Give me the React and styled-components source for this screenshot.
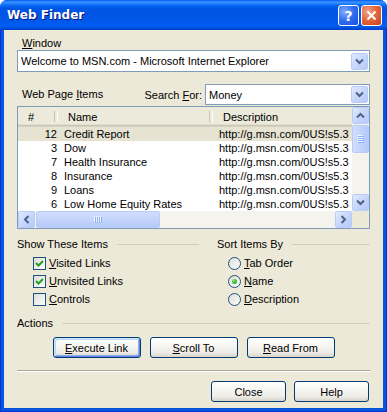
import React from 'react';
import styled, { createGlobalStyle } from 'styled-components';

const Global = createGlobalStyle`
  html, body { margin: 0; padding: 0; background: #ffffff; }
  body { font-family: "Liberation Sans", Arial, sans-serif; font-size: 11px; color: #000; }
  * { box-sizing: border-box; }
`;

const Win = styled.div`
  width: 387px;
  height: 412px;
  display: flex;
  flex-direction: column;
  background: #0855DD;
  border-radius: 7px 7px 0 0;
  overflow: hidden;
`;

const TitleBar = styled.div`
  height: 30px;
  flex: none;
  display: flex;
  align-items: center;
  padding: 0 5px 0 7px;
  background: linear-gradient(to bottom, #0058EE 0px, #3A93FF 2px, #2F8AFF 3px, #0B6EF5 5px, #0057E5 8px, #0054E3 14px, #0058EB 22px, #005FF5 26px, #0050DB 28px, #003DC8 30px);
`;

const Title = styled.div`
  flex: 1;
  font-family: "DejaVu Sans", "Liberation Sans", sans-serif;
  font-weight: bold;
  font-size: 12px;
  color: #fff;
  text-shadow: 1px 1px 0 #0A1883;
  padding-bottom: 1px;
`;

const TitleBtns = styled.div`
  display: flex;
  gap: 2px;
  padding-top: 1px;
`;

const CapBtn = styled.div`
  width: 21px;
  height: 21px;
  border: 1px solid #fff;
  border-radius: 3px;
  display: flex;
  align-items: center;
  justify-content: center;
  color: #fff;
  font-family: "DejaVu Sans", sans-serif;
  font-weight: bold;
  font-size: 14px;
  background: ${p => p.$red
    ? 'radial-gradient(circle at 30% 30%, #F0A58C 0%, #E4683F 45%, #C8401A 100%)'
    : 'radial-gradient(circle at 30% 30%, #7FAEFF 0%, #2E6CF1 50%, #1A4FD6 100%)'};
`;

const Frame = styled.div`
  flex: 1;
  display: flex;
  padding: 0 4px 4px;
  box-shadow: inset 1px 0 0 #0831D9, inset -1px 0 0 #0831D9, inset 0 -1px 0 #0831D9;
`;

const Client = styled.div`
  flex: 1;
  background: #ECE9D8;
  padding: 7px 13px 6px;
  display: flex;
  flex-direction: column;
`;

const Label = styled.div`
  line-height: 13px;
  height: 13px;
  padding-left: ${p => p.$pl ?? 5}px;
  white-space: nowrap;
`;

const Combo = styled.div`
  height: 21px;
  flex: ${p => (p.$w ? 'none' : '1')};
  width: ${p => (p.$w ? p.$w + 'px' : 'auto')};
  border: 1px solid #7F9DB9;
  background: #fff;
  display: flex;
  align-items: center;
  padding: 0 1px 0 3px;
`;

const ComboText = styled.div`
  flex: 1;
  white-space: nowrap;
  overflow: hidden;
`;

const ArrowBtn = styled.div`
  width: ${p => p.$w || 17}px;
  height: ${p => p.$h || 17}px;
  flex: none;
  border: 1px solid #B8CCF7;
  border-radius: 2px;
  background: linear-gradient(135deg, #E1EAFE 0%, #C7D7FC 50%, #B4C9F8 100%);
  display: flex;
  align-items: center;
  justify-content: center;
`;

const SearchRow = styled.div`
  margin-top: 12px;
  display: flex;
  align-items: center;
`;

const SearchLabel = styled.div`
  margin-right: 3px;
  white-space: nowrap;
`;

const Spacer = styled.div`
  flex: 1;
`;

const ListBox = styled.div`
  margin-top: 1px;
  height: 123px;
  flex: none;
  border: 1px solid #7F9DB9;
  background: #fff;
  display: grid;
  grid-template-columns: 1fr 17px;
  grid-template-rows: 1fr 17px;
  overflow: hidden;
`;

const ListBody = styled.div`
  overflow: hidden;
  display: flex;
  flex-direction: column;
`;

const COLS = '40px 155px 1fr';

const Header = styled.div`
  height: 20px;
  flex: none;
  display: grid;
  grid-template-columns: ${COLS};
  background: #EBEADB;
  box-shadow: inset 0 -1px 0 #D6D2C2, inset 0 -2px 0 #CBC7B8, inset 0 -3px 0 #E2DECD;
`;

const HeadCell = styled.div`
  position: relative;
  padding-left: 10px;
  padding-bottom: 1px;
  display: flex;
  align-items: center;
  white-space: nowrap;
  overflow: hidden;
  &::after {
    content: '';
    display: ${p => (p.$last ? 'none' : 'block')};
    position: absolute;
    right: 0;
    top: 4px;
    bottom: 5px;
    width: 2px;
    border-left: 1px solid #C7C5B2;
    border-right: 1px solid #FFFFFF;
  }
`;

const Row = styled.div`
  height: 14px;
  flex: none;
  display: grid;
  grid-template-columns: ${COLS};
  background: ${p => (p.$sel ? '#E6E3D3' : 'transparent')};
  line-height: 14px;
`;

const Cell = styled.div`
  white-space: nowrap;
  overflow: hidden;
  text-align: ${p => (p.$right ? 'right' : 'left')};
  padding: ${p => (p.$right ? '0 1px 0 0' : '0 0 0 6px')};
`;

const VScroll = styled.div`
  display: flex;
  flex-direction: column;
  background: #F4F3EE;
`;

const HScroll = styled.div`
  display: flex;
  background: #F4F3EE;
`;

const Track = styled.div`
  flex: 1;
  display: flex;
  flex-direction: ${p => (p.$v ? 'column' : 'row')};
  padding: ${p => (p.$v ? '1px 0' : '0 1px')};
`;

const Thumb = styled.div`
  ${p => (p.$v ? `height: ${p.$len}px; width: 100%;` : `width: ${p.$len}px; height: 100%;`)}
  border: 1px solid #B8CCF7;
  border-radius: 2px;
  background: ${p => (p.$v
    ? 'linear-gradient(to right, #D1DDFD 0%, #C3D4FC 50%, #B6CAF8 100%)'
    : 'linear-gradient(to bottom, #D1DDFD 0%, #C3D4FC 50%, #B6CAF8 100%)')};
  display: flex;
  align-items: center;
  justify-content: center;
`;

const Corner = styled.div`
  background: #ECE9D8;
`;

const Groups = styled.div`
  margin-top: 9px;
  display: grid;
  grid-template-columns: 182px 1fr;
  column-gap: 18px;
`;

const GroupHead = styled.div`
  display: flex;
  align-items: center;
  gap: 9px;
  height: 13px;
  line-height: 13px;
  white-space: nowrap;
  &::after {
    content: '';
    flex: 1;
    height: 1px;
    background: #D0D0BF;
  }
`;

const OptList = styled.div`
  margin-top: 3px;
  padding-left: ${p => p.$pl}px;
  display: flex;
  flex-direction: column;
`;

const Opt = styled.div`
  height: 18px;
  display: flex;
  align-items: center;
  gap: ${p => p.$gap || 3}px;
  white-space: nowrap;
`;

const Box = styled.div`
  width: 13px;
  height: 13px;
  border: 1px solid #1C5180;
  background: linear-gradient(135deg, #DCDCD7 0%, #F4F4F1 70%, #FFFFFF 100%);
  display: flex;
  align-items: center;
  justify-content: center;
`;

const Radio = styled.div`
  width: 13px;
  height: 13px;
  border-radius: 50%;
  border: 1px solid #1C5180;
  background: linear-gradient(135deg, #DCDCD7 0%, #F4F4F1 70%, #FFFFFF 100%);
  display: flex;
  align-items: center;
  justify-content: center;
`;

const Dot = styled.div`
  width: 5px;
  height: 5px;
  border-radius: 50%;
  background: radial-gradient(circle at 35% 35%, #8FDC7E 0%, #2DB52A 60%, #1E9A1E 100%);
`;

const Section = styled(GroupHead)`
  margin-top: 9px;
`;

const BtnRow = styled.div`
  margin-top: ${p => p.$mt}px;
  display: flex;
  justify-content: ${p => p.$end ? 'flex-end' : 'center'};
  gap: ${p => p.$gap}px;
  padding-right: ${p => p.$pr || 0}px;
`;

const Btn = styled.button`
  width: ${p => p.$w}px;
  height: 21px;
  border: 1px solid #003C74;
  border-radius: 3px;
  padding: 0;
  font-family: "Liberation Sans", Arial, sans-serif;
  font-size: 11px;
  color: #000;
  background: linear-gradient(to bottom, #FFFFFF 0%, #F7F7F4 35%, #EEEDE8 75%, #D9D4CA 100%);
  box-shadow: ${p => (p.$focus
    ? 'inset 1px 1px 0 #CEE7FF, inset -1px -1px 0 #6982EE, inset 2px 2px 0 #BCD4F6, inset -2px -2px 0 #89ADE4'
    : 'none')};
`;

const Separator = styled.div`
  margin-top: 12px;
  height: 2px;
  border-top: 1px solid #ACA899;
  border-bottom: 1px solid #FFFFFF;
`;

const Chevron = ({ dir = 'down' }) => {
  const rot = { down: 0, up: 180, left: 90, right: -90 }[dir];
  return (
    <svg width="9" height="9" viewBox="0 0 9 9" style={{ transform: `rotate(${rot}deg)` }}>
      <path d="M1 2.5 L4.5 6 L8 2.5" fill="none" stroke="#4D6185" strokeWidth="2" />
    </svg>
  );
};

const Grip = ({ v }) => (
  <svg width={v ? 7 : 8} height={v ? 8 : 7} viewBox={v ? '0 0 7 8' : '0 0 8 7'}>
    {[0, 2, 4, 6].map(i => (
      v ? (
        <g key={i}>
          <rect x="0" y={i} width="6" height="1" fill="#EEF4FE" />
          <rect x="1" y={i + 1} width="6" height="1" fill="#8CB0F8" />
        </g>
      ) : (
        <g key={i}>
          <rect x={i} y="0" width="1" height="6" fill="#EEF4FE" />
          <rect x={i + 1} y="1" width="1" height="6" fill="#8CB0F8" />
        </g>
      )
    ))}
  </svg>
);

const Check = () => (
  <svg width="9" height="9" viewBox="0 0 9 9">
    <path d="M1 4 L3.5 6.5 L8 2" fill="none" stroke="#21A121" strokeWidth="2" />
  </svg>
);

const rows = [
  ['12', 'Credit Report'],
  ['3', 'Dow'],
  ['7', 'Health Insurance'],
  ['8', 'Insurance'],
  ['9', 'Loans'],
  ['6', 'Low Home Equity Rates'],
];

const url = 'http://g.msn.com/0US!s5.3';

export default function App() {
  return (
    <>
      <Global />
      <Win>
        <TitleBar>
          <Title>Web Finder</Title>
          <TitleBtns>
            <CapBtn>?</CapBtn>
            <CapBtn $red>
              <svg width="11" height="11" viewBox="0 0 11 11">
                <path d="M1.5 1.5 L9.5 9.5 M9.5 1.5 L1.5 9.5" stroke="#fff" strokeWidth="2" />
              </svg>
            </CapBtn>
          </TitleBtns>
        </TitleBar>
        <Frame>
          <Client>
            <Label><u>W</u>indow</Label>
            <Combo>
              <ComboText>Welcome to MSN.com - Microsoft Internet Explorer</ComboText>
              <ArrowBtn><Chevron /></ArrowBtn>
            </Combo>
            <SearchRow>
              <Label>Web Page <u>I</u>tems</Label>
              <Spacer />
              <SearchLabel>Search <u>F</u>or:</SearchLabel>
              <Combo $w={165}>
                <ComboText>Money</ComboText>
                <ArrowBtn><Chevron /></ArrowBtn>
              </Combo>
            </SearchRow>
            <ListBox>
              <ListBody>
                <Header>
                  <HeadCell>#</HeadCell>
                  <HeadCell>Name</HeadCell>
                  <HeadCell $last>Description</HeadCell>
                </Header>
                {rows.map(([n, name], i) => (
                  <Row key={n} $sel={i === 0}>
                    <Cell $right>{n}</Cell>
                    <Cell>{name}</Cell>
                    <Cell>{url}</Cell>
                  </Row>
                ))}
              </ListBody>
              <VScroll>
                <ArrowBtn><Chevron dir="up" /></ArrowBtn>
                <Track $v>
                  <Thumb $v $len={28}><Grip v /></Thumb>
                </Track>
                <ArrowBtn><Chevron dir="down" /></ArrowBtn>
              </VScroll>
              <HScroll>
                <ArrowBtn><Chevron dir="left" /></ArrowBtn>
                <Track>
                  <Thumb $len={124}><Grip /></Thumb>
                </Track>
                <ArrowBtn><Chevron dir="right" /></ArrowBtn>
              </HScroll>
              <Corner />
            </ListBox>
            <Groups>
              <div>
                <GroupHead>Show These Items</GroupHead>
                <OptList $pl={16}>
                  <Opt><Box><Check /></Box><span><u>V</u>isited Links</span></Opt>
                  <Opt><Box><Check /></Box><span><u>U</u>nvisited Links</span></Opt>
                  <Opt><Box /><span><u>C</u>ontrols</span></Opt>
                </OptList>
              </div>
              <div>
                <GroupHead>Sort Items By</GroupHead>
                <OptList $pl={11}>
                  <Opt><Radio /><span><u>T</u>ab Order</span></Opt>
                  <Opt><Radio><Dot /></Radio><span><u>N</u>ame</span></Opt>
                  <Opt><Radio /><span><u>D</u>escription</span></Opt>
                </OptList>
              </div>
            </Groups>
            <Section>Actions</Section>
            <BtnRow $mt={7} $gap={9}>
              <Btn $w={88} $focus><u>E</u>xecute Link</Btn>
              <Btn $w={88}><u>S</u>croll To</Btn>
              <Btn $w={88}><u>R</u>ead From</Btn>
            </BtnRow>
            <Separator />
            <BtnRow $mt={9} $gap={8} $end $pr={1}>
              <Btn $w={75}>Close</Btn>
              <Btn $w={75}>Help</Btn>
            </BtnRow>
          </Client>
        </Frame>
      </Win>
    </>
  );
}
